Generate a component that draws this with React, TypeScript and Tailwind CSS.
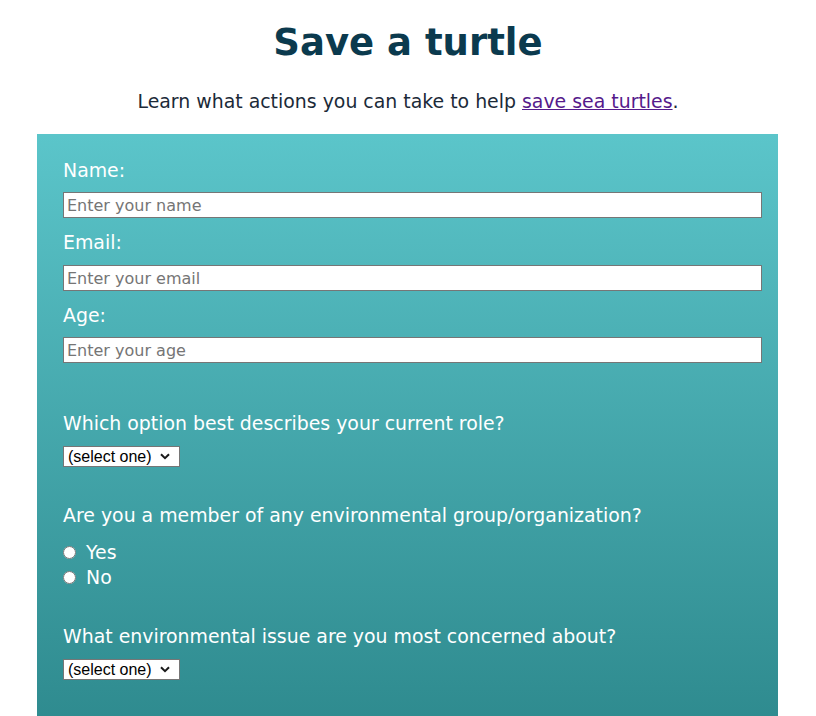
import React from 'react';

const font = { fontFamily: '"DejaVu Sans", Verdana, sans-serif' };
const arial = { fontFamily: '"Liberation Sans", Arial, sans-serif' };

function Select() {
  return (
    <div className="relative mt-[12px] h-[21px] w-[117px]">
      <select
        className="block h-[21px] w-[117px] appearance-none border border-[#767676] bg-white pl-[4px] text-[16px] leading-[19px] text-black"
        style={arial}
      >
        <option>(select one)</option>
      </select>
      <svg
        className="pointer-events-none absolute left-[97px] top-[7px]"
        width="10"
        height="7"
        viewBox="0 0 10 7"
        fill="none"
      >
        <path d="M1 1.2 L5 5.2 L9 1.2" stroke="#1a1a1a" strokeWidth="2" />
      </svg>
    </div>
  );
}

export default function App() {
  return (
    <div className="min-h-screen bg-white text-[#1b2a38]" style={font}>
      <h1 className="pt-[18px] text-center text-[37px] font-bold leading-[50px] text-[#0b3a4e]">Save a turtle</h1>
      <p className="mt-[22px] text-center text-[18.9px] leading-[22px]">
        Learn what actions you can take to help{' '}
        <a href="#" className="text-[#551a8b] underline">save sea turtles</a>.
      </p>
      <form className="ml-[37px] mt-[22px] w-[741px] bg-gradient-to-b from-[#5bc5ca] to-[#2d898d] pb-[60px] pl-[26px] pr-[16px] pt-[25px] text-white">
        <label className="block text-[18.9px] leading-[22px]">Name:</label>
        <input
          type="text"
          placeholder="Enter your name"
          className="mt-[11px] block h-[26px] w-full border border-[#767676] bg-white px-[3px] text-[16px] text-black placeholder:text-[#757575]"
        />
        <label className="mt-[13px] block text-[18.9px] leading-[22px]">Email:</label>
        <input
          type="email"
          placeholder="Enter your email"
          className="mt-[12px] block h-[26px] w-full border border-[#767676] bg-white px-[3px] text-[16px] text-black placeholder:text-[#757575]"
        />
        <label className="mt-[13px] block text-[18.9px] leading-[22px]">Age:</label>
        <input
          type="number"
          placeholder="Enter your age"
          className="mt-[11px] block h-[26px] w-full border border-[#767676] bg-white px-[3px] text-[16px] text-black placeholder:text-[#757575]"
        />

        <p className="mt-[49px] text-[18.9px] leading-[22px]">Which option best describes your current role?</p>
        <Select />

        <p className="mt-[37px] text-[18.9px] leading-[22px]">Are you a member of any environmental group/organization?</p>
        <div className="mt-[15px] flex flex-col gap-[3px] text-[18.9px] leading-[22px]">
          <label className="flex items-center gap-[10px]">
            <input type="radio" name="member" className="h-[13px] w-[13px]" style={{ appearance: 'auto' }} />
            Yes
          </label>
          <label className="flex items-center gap-[10px]">
            <input type="radio" name="member" className="h-[13px] w-[13px]" style={{ appearance: 'auto' }} />
            No
          </label>
        </div>

        <p className="mt-[37px] text-[18.9px] leading-[22px]">What environmental issue are you most concerned about?</p>
        <Select />
      </form>
    </div>
  );
}
